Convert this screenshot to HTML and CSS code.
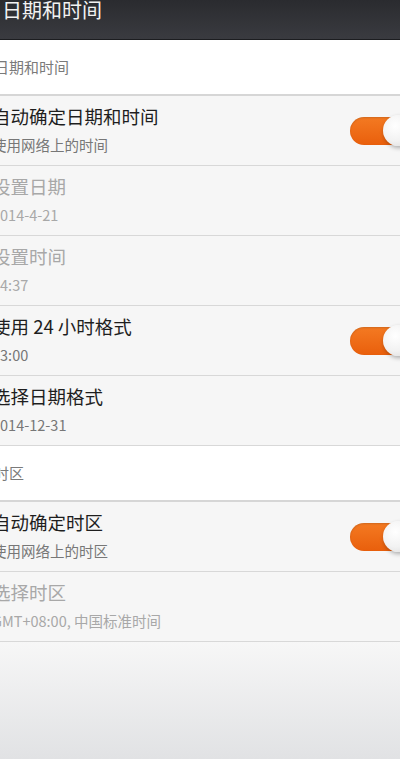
FILE: index.html
```html
<!DOCTYPE html>
<html lang="zh-CN">
<head>
  <meta charset="UTF-8">
  <meta name="viewport" content="width=device-width, initial-scale=1.0">
  <title>日期和时间</title>
  <link rel="stylesheet" href="styles.css">
</head>
<body>
  <div class="screen">
    <header class="title-bar">
      <h1>日期和时间</h1>
    </header>

    <div class="section-header">日期和时间</div>

    <div class="row">
      <div class="row-text">
        <div class="row-title">自动确定日期和时间</div>
        <div class="row-sub">使用网络上的时间</div>
      </div>
      <div class="toggle on"><span class="knob"></span></div>
    </div>

    <div class="row disabled">
      <div class="row-text">
        <div class="row-title">设置日期</div>
        <div class="row-sub">2014-4-21</div>
      </div>
    </div>

    <div class="row disabled">
      <div class="row-text">
        <div class="row-title">设置时间</div>
        <div class="row-sub">14:37</div>
      </div>
    </div>

    <div class="row">
      <div class="row-text">
        <div class="row-title">使用 24 小时格式</div>
        <div class="row-sub">13:00</div>
      </div>
      <div class="toggle on"><span class="knob"></span></div>
    </div>

    <div class="row">
      <div class="row-text">
        <div class="row-title">选择日期格式</div>
        <div class="row-sub">2014-12-31</div>
      </div>
    </div>

    <div class="section-header">时区</div>

    <div class="row">
      <div class="row-text">
        <div class="row-title">自动确定时区</div>
        <div class="row-sub">使用网络上的时区</div>
      </div>
      <div class="toggle on"><span class="knob"></span></div>
    </div>

    <div class="row disabled">
      <div class="row-text">
        <div class="row-title">选择时区</div>
        <div class="row-sub">GMT+08:00, 中国标准时间</div>
      </div>
    </div>
  </div>
</body>
</html>
```

FILE: styles.css
```css
html, body {
  height: 100%;
}

body {
  margin: 0;
  overflow: hidden;
  font-family: "Noto Sans CJK SC", "Noto Sans", sans-serif;
  background: linear-gradient(180deg, #f7f7f7 0%, #f7f7f7 640px, #e1e2e4 759px);
  color: #1e1e1e;
}

.screen {
  width: 422px;
  margin-left: -8px;
}

.title-bar {
  height: 40px;
  background: linear-gradient(180deg, #2a2b2f, #3a3b40);
  border-bottom: 1px solid #1c1d20;
  box-sizing: border-box;
  padding-left: 10px;
}

.title-bar h1 {
  margin: 0;
  font-size: 20px;
  line-height: 20px;
  font-weight: normal;
  color: #f2f2f2;
}

.section-header {
  height: 56px;
  box-sizing: border-box;
  background: #fff;
  border-bottom: 2px solid #d6d6d6;
  font-size: 15px;
  line-height: 54px;
  color: #7a7a7a;
  padding-left: 2px;
}

.row {
  height: 70px;
  box-sizing: border-box;
  display: flex;
  align-items: center;
  justify-content: space-between;
  background: #f6f6f6;
  border-bottom: 1px solid #d8d8d8;
}

.row-text {
  display: flex;
  flex-direction: column;
  gap: 9px;
  margin-top: -2px;
}

.row-title {
  font-size: 18.5px;
  line-height: 22px;
  color: #1e1e1e;
}

.row-sub {
  font-size: 14.5px;
  line-height: 18px;
  color: #777;
}

.disabled .row-title,
.disabled .row-sub {
  color: #a8a8a8;
}

.toggle {
  width: 64px;
  height: 28px;
  border-radius: 14px;
  background: linear-gradient(180deg, #f47a22, #e95f0c);
  box-shadow: inset 0 1px 2px rgba(0, 0, 0, 0.15);
  position: relative;
  flex-shrink: 0;
}

.knob {
  position: absolute;
  left: 33px;
  top: -2px;
  width: 31px;
  height: 31px;
  border-radius: 50%;
  background: radial-gradient(circle at 40% 35%, #ffffff 0%, #f2f2f2 55%, #d9d9d9 100%);
  box-shadow: 1px 2px 4px rgba(0, 0, 0, 0.3);
}
```
